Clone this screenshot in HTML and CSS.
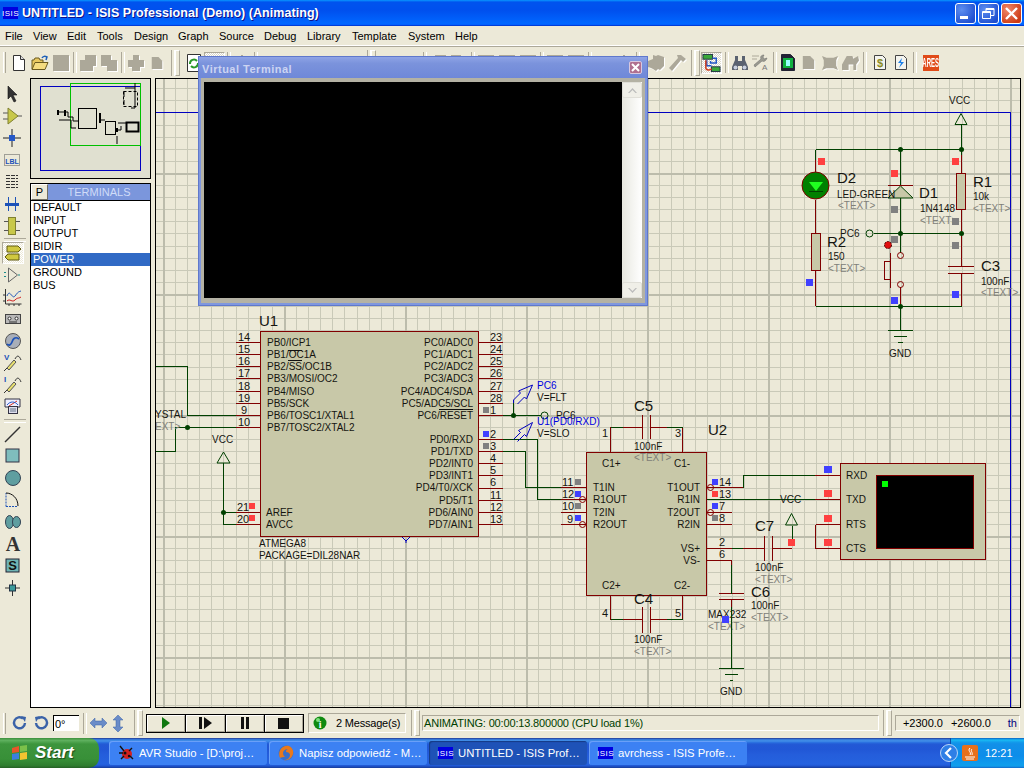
FILE: index.html
```html
<!DOCTYPE html>
<html lang="en">
<head>
<meta charset="utf-8">
<title>UNTITLED - ISIS Professional (Demo) (Animating)</title>
<link rel="stylesheet" href="styles.css">
</head>
<body>
<svg class="defs" width="0" height="0">
  <defs>
    <symbol id="gdoc" viewBox="0 0 16 18"><path d="M1 1h9l5 5v11H1z"/></symbol>
    <symbol id="gblock" viewBox="0 0 16 18"><path d="M0 1h16v16H0z"/></symbol>
    <symbol id="gcopy" viewBox="0 0 16 18"><path d="M5 1h11v11h-3v5H0V6h5z"/></symbol>
    <symbol id="gpaste" viewBox="0 0 16 18"><path d="M0 1h10v5h6v11H6v-5H0z"/></symbol>
    <symbol id="gprint" viewBox="0 0 16 18"><path d="M5 1h6v5h5v7h-4v4H4v-4H0V6h5z"/></symbol>
    <symbol id="gcirc" viewBox="0 0 16 18"><circle cx="8" cy="9" r="7"/></symbol>
    <symbol id="gplus" viewBox="0 0 16 18"><path d="M7 1h2v7h7v2H9v7H7v-7H0V8h7z"/></symbol>
    <symbol id="gchip" viewBox="0 0 16 18"><path d="M5 1l3 1 2-1 6 2v9l-4 4-2-1-2 2-3-2-2-1-3-1V7l5-2z"/></symbol>
    <symbol id="ghammer" viewBox="0 0 18 18"><path d="M9 1l4 0 5 4-3 3-2-2-9 11-3-3 9-10z"/></symbol>
    <symbol id="gcross" viewBox="0 0 18 18"><path d="M0 1l5 2h8l5-2-2 5v6l2 5-5-2H5l-5 2 2-5V6z"/></symbol>
    <symbol id="ghouse" viewBox="0 0 18 18"><path d="M5 2h6l1 3 5-3 1 5-3 4v6h-3v-6H7v6H0v-6z"/></symbol>
  </defs>
</svg>
<div class="app">

  <header class="titlebar">
    <span class="isis isis-title">ISIS</span>
    <span class="title-text">UNTITLED - ISIS Professional (Demo) (Animating)</span>
    <span class="win-btns">
      <span class="wbtn"><svg width="21" height="21" viewBox="0 0 21 21"><rect x="5" y="13" width="8" height="3" fill="#fff"/></svg></span>
      <span class="wbtn"><svg width="21" height="21" viewBox="0 0 21 21"><path d="M8 5.500h8v7h-3M8 5.500v3M8 6.500h8M4.500 8.500h8v7h-8zM4.500 9.500h8" fill="none" stroke="#fff"/></svg></span>
      <span class="wbtn wclose"><svg width="21" height="21" viewBox="0 0 21 21"><path d="M5 5l11 11M16 5L5 16" stroke="#fff" stroke-width="2.400"/></svg></span>
    </span>
  </header>

  <nav class="menubar">
    <span class="mi mi-file">File</span><span class="mi mi-view">View</span><span class="mi mi-edit">Edit</span><span class="mi mi-tools">Tools</span><span class="mi mi-design">Design</span><span class="mi mi-graph">Graph</span><span class="mi mi-source">Source</span><span class="mi mi-debug">Debug</span><span class="mi mi-library">Library</span><span class="mi mi-template">Template</span><span class="mi mi-system">System</span><span class="mi mi-help">Help</span>
  </nav>

  <div class="toolbar">
    <span class="grip"></span>
    <span class="tool"><svg width="14" height="18" viewBox="0 0 14 18"><path d="M1.500 1.500h7l4 4v11h-11z" fill="#fff" stroke="#333"/><path d="M8.500 1.500v4h4" fill="#ddd" stroke="#333"/></svg></span>
    <span class="tool"><svg width="18" height="18" viewBox="0 0 18 18"><path d="M1 15V6h2l1-2h4l1 2h3v2" fill="#e8c860" stroke="#6b5a20"/><path d="M1 15.500l3-7h13l-3 7z" fill="#f5dc80" stroke="#6b5a20"/><path d="M11 4c1-2 3-2 5-1l-1 3" fill="none" stroke="#1c5fb8" stroke-width="1.500"/></svg></span>
    <span class="tool gr"><svg width="16" height="18"><use href="#gblock"/></svg></span>
    <span class="sep"></span>
    <span class="tool gr"><svg width="16" height="18"><use href="#gcopy"/></svg></span>
    <span class="tool gr"><svg width="16" height="18"><use href="#gpaste"/></svg></span>
    <span class="sep"></span>
    <span class="tool gr"><svg width="16" height="18"><use href="#gprint"/></svg></span>
    <span class="tool gr"><svg width="12" height="18"><use href="#gdoc"/></svg></span>
    <span class="dsep"></span>
    <span class="tool"><svg width="16" height="20" viewBox="0 0 16 20"><path d="M1.500 1.500h13v17h-13z" fill="#fff" stroke="#333"/><path d="M4 11a4 4 0 0 1 7-3" fill="none" stroke="#2a9a2a" stroke-width="2"/><path d="M12 10a4 4 0 0 1-7 3" fill="none" stroke="#2a9a2a" stroke-width="2"/></svg></span>
    <span class="tool pressed"></span>
    <span class="sep"></span>
    <span class="tool gr"><svg width="16" height="18"><use href="#gplus"/></svg></span>
    <span class="sep"></span>
    <span class="tool gr"><svg width="16" height="18"><use href="#gcirc"/></svg></span>
    <span class="tool gr"><svg width="16" height="18"><use href="#gcirc"/></svg></span>
    <span class="tool gr"><svg width="16" height="18"><use href="#gcirc"/></svg></span>
    <span class="tool gr"><svg width="16" height="18"><use href="#gcirc"/></svg></span>
    <span class="tool gr"><svg width="16" height="18"><use href="#gcirc"/></svg></span>
    <span class="dsep"></span>
    <span class="tool gr"><svg width="16" height="18"><use href="#gcirc"/></svg></span>
    <span class="tool gr"><svg width="16" height="18"><use href="#gcirc"/></svg></span>
    <span class="sep"></span>
    <span class="tool gr"><svg width="16" height="18"><use href="#gcopy"/></svg></span>
    <span class="tool gr"><svg width="16" height="18"><use href="#gpaste"/></svg></span>
    <span class="sep"></span>
    <span class="tool gr"><svg width="16" height="18"><use href="#gblock"/></svg></span>
    <span class="tool gr"><svg width="16" height="18"><use href="#gblock"/></svg></span>
    <span class="tool gr"><svg width="16" height="18"><use href="#gblock"/></svg></span>
    <span class="sep"></span>
    <span class="tool gr"><svg width="16" height="18"><use href="#gblock"/></svg></span>
    <span class="tool gr"><svg width="16" height="18"><use href="#gblock"/></svg></span>
    <span class="sep"></span>
    <span class="tool gr"><svg width="16" height="18"><use href="#gcirc"/></svg></span>
    <span class="tool gr"><svg width="16" height="18"><use href="#gplus"/></svg></span>
    <span class="sep sep-wide"></span>
    <span class="tool gr"><svg width="16" height="18"><use href="#gchip"/></svg></span>
    <span class="tool gr"><svg width="18" height="18"><use href="#ghammer"/></svg></span>
    <span class="dsep dsep-r"></span>
    <span class="tool pressed link"><svg width="20" height="20" viewBox="0 0 20 20"><rect x="1" y="1" width="10" height="5" fill="#3aa83a" stroke="#234"/><rect x="10" y="14" width="9" height="5" fill="#3aa83a" stroke="#234"/><path d="M11 5h4v5H9v-2M5 7v6h5" fill="none" stroke="#2458c8" stroke-width="1.600"/><path d="M4 7v8c0 3 5 3 6 1" fill="none" stroke="#d04020" stroke-width="1.600"/></svg></span>
    <span class="sep"></span>
    <span class="tool"><svg width="16" height="16" viewBox="0 0 16 16"><path d="M3 1h3v5h4V1h3v4l3 7v3h-6v-4H6v4H0v-3l3-7z" fill="#5a6270"/><circle cx="3.500" cy="12.500" r="2" fill="#c8d0e0"/><circle cx="12.500" cy="12.500" r="2" fill="#c8d0e0"/></svg></span>
    <span class="tool"><svg width="17" height="17" viewBox="0 0 17 17"><path d="M12 1c-3 0-4 2-3 4L2 11l1 2 7-6c2 1 4 0 5-3l-3 1-1-2z" fill="#9a9a90" stroke="#666" stroke-width=".5"/><path d="M0 2h7M0 5h5" stroke="#aca899"/><text class="a-mini" x="10" y="16">A</text></svg></span>
    <span class="sep"></span>
    <span class="tool"><svg width="14" height="17" viewBox="0 0 14 17"><path d="M.5.500h9l4 4v12H.5z" fill="#223" stroke="#223"/><rect x="2" y="4" width="10" height="10" fill="#10b040"/><rect x="5" y="6" width="4" height="6" fill="#9ff"/></svg></span>
    <span class="tool gr"><svg width="13" height="17"><use href="#gdoc"/></svg></span>
    <span class="tool gr"><svg width="16" height="16"><use href="#gcross"/></svg></span>
    <span class="tool gr"><svg width="17" height="17"><use href="#ghouse"/></svg></span>
    <span class="sep sep-r"></span>
    <span class="tool"><svg width="12" height="15" viewBox="0 0 12 15"><path d="M.5.500h8l3 3v11H.5z" fill="#f4f4ee" stroke="#444"/><text class="dollar" x="6" y="12">$</text></svg></span>
    <span class="tool"><svg width="12" height="15" viewBox="0 0 12 15"><path d="M.5.500h8l3 3v11H.5z" fill="#f4f4ee" stroke="#444"/><path d="M7 3L3 8h3l-2 5 5-6H6z" fill="#1c7fe8"/></svg></span>
    <span class="sep"></span>
    <span class="ares"><span class="ares-text">ARES</span></span>
  </div>

  <main class="workarea">
    <aside class="lefttools">
      <span class="lt"><svg width="22" height="20" viewBox="0 0 22 20"><path d="M7 2v13l3-3 3 6 2-1-3-6h4z" fill="#333" stroke="#111" stroke-width=".6"/></svg></span>
      <span class="lt"><svg width="22" height="20" viewBox="0 0 22 20"><path d="M2 7h5M2 13h5M16 10h5" stroke="#555"/><path d="M7 2l10 8-10 8z" fill="#c8c84a" stroke="#808030"/></svg></span>
      <span class="lt"><svg width="22" height="20" viewBox="0 0 22 20"><path d="M2 10h18M11 1v18" stroke="#222"/><rect x="8" y="7" width="6" height="6" fill="#2458c8"/></svg></span>
      <span class="lt"><svg width="22" height="20" viewBox="0 0 22 20"><rect x="3.500" y="4.500" width="15" height="11" fill="none" stroke="#555" stroke-dasharray="1 1"/><text class="lbl" x="11" y="13.500">LBL</text></svg></span>
      <span class="lt"><svg width="22" height="20" viewBox="0 0 22 20"><path d="M5 3.500h12M5 6.500h12M5 9.500h12M5 12.500h12M5 15.500h12" stroke="#333" stroke-dasharray="4 1"/></svg></span>
      <span class="lt"><svg width="22" height="20" viewBox="0 0 22 20"><rect x="4" y="9" width="14" height="3" fill="#1c52b8"/><path d="M7.500 3v14M14.500 3v14" stroke="#1c52b8"/></svg></span>
      <span class="lt"><svg width="22" height="20" viewBox="0 0 22 20"><path d="M3 5.500h4M3 14.500h4M15 5.500h4M15 14.500h4" stroke="#555"/><rect x="7.500" y="1.500" width="7" height="17" fill="#c8c84a" stroke="#808030"/></svg></span>
      <span class="lsep"></span>
      <span class="lt on"><svg width="22" height="20" viewBox="0 0 22 20"><path d="M5 3h11l3 3-3 3H5z" fill="#d0c840" stroke="#605a10"/><path d="M17 11H6l-3 3 3 3h11z" fill="#d0c840" stroke="#605a10"/></svg></span>
      <span class="lt"><svg width="22" height="20" viewBox="0 0 22 20"><path d="M3 7.500h3M3 11.500h3M17 10h3" stroke="#1a8a8a" stroke-dasharray="2 1"/><path d="M7.500 3l9 7-9 7z" fill="none" stroke="#666"/></svg></span>
      <span class="lt"><svg width="22" height="20" viewBox="0 0 22 20"><path d="M4.500 2v15h16M2 14h3M2 8h3M8 17v2M13 17v2M18 17v2" fill="none" stroke="#333"/><path d="M6 9c3-8 5 4 8 0s3-4 6-5" fill="none" stroke="#1c52b8"/><path d="M6 14c3-3 5 2 8-1s3-1 6-3" fill="none" stroke="#d02020"/></svg></span>
      <span class="lt"><svg width="22" height="20" viewBox="0 0 22 20"><rect x="4.500" y="5.500" width="15" height="9" fill="#b8b8b8" stroke="#444"/><circle cx="8.500" cy="9.500" r="1.500" fill="#fff" stroke="#333"/><circle cx="15.500" cy="9.500" r="1.500" fill="#fff" stroke="#333"/><path d="M8 13h8" stroke="#333"/></svg></span>
      <span class="lt"><svg width="22" height="20" viewBox="0 0 22 20"><circle cx="12" cy="10" r="7.500" fill="#a8aeb8" stroke="#555"/><path d="M6 13c2 2 4 1 5-2s3-6 7-3" fill="none" stroke="#1c52b8" stroke-width="1.700"/></svg></span>
      <span class="lt"><svg width="22" height="20" viewBox="0 0 22 20"><path d="M3 18l3-3M14 6c2-4 4-4 6 1" fill="none" stroke="#333"/><path d="M6 15l7-8 2 2-7 8z" fill="#e8e070" stroke="#555"/><text class="probe" x="3" y="7">V</text></svg></span>
      <span class="lt"><svg width="22" height="20" viewBox="0 0 22 20"><path d="M3 18l3-3M14 6c2-4 4-4 6 1" fill="none" stroke="#333"/><path d="M6 15l7-8 2 2-7 8z" fill="#e8e070" stroke="#555"/><text class="probe" x="3" y="7">I</text></svg></span>
      <span class="lt"><svg width="22" height="20" viewBox="0 0 22 20"><path d="M4 2h15v8H4z" fill="#eef" stroke="#334"/><path d="M8 9l8-5" stroke="#d83020"/><path d="M6 8c3-4 8-4 11 0" fill="none" stroke="#2458c8"/><rect x="7.500" y="9.500" width="9" height="7" fill="#dde" stroke="#334"/><path d="M9 12h6M9 14h6" stroke="#678"/></svg></span>
      <span class="lsep"></span>
      <span class="lt"><svg width="22" height="20" viewBox="0 0 22 20"><path d="M4 18L19 3" stroke="#333" stroke-width="1.500"/></svg></span>
      <span class="lt"><svg width="22" height="20" viewBox="0 0 22 20"><rect x="5" y="3" width="13" height="13" fill="#7fbdbd" stroke="#334"/></svg></span>
      <span class="lt"><svg width="22" height="20" viewBox="0 0 22 20"><circle cx="12" cy="10" r="7.500" fill="#5f9ea0" stroke="#345"/></svg></span>
      <span class="lt"><svg width="22" height="20" viewBox="0 0 22 20"><path d="M5 16.500V3" fill="none" stroke="#1c52b8" stroke-dasharray="2 1"/><path d="M5 16.500h12" fill="none" stroke="#1c52b8" stroke-dasharray="2 1"/><path d="M5 3c6 0 12 5 12 13" fill="none" stroke="#111"/></svg></span>
      <span class="lt"><svg width="22" height="20" viewBox="0 0 22 20"><ellipse cx="8.500" cy="10" rx="4" ry="6.500" fill="#5f9ea0" stroke="#345"/><ellipse cx="15.500" cy="10" rx="4" ry="5.500" fill="#5f9ea0" stroke="#345"/></svg></span>
      <span class="lt"><svg width="22" height="20" viewBox="0 0 22 20"><text class="big-a" x="12" y="17">A</text></svg></span>
      <span class="lt"><svg width="22" height="20" viewBox="0 0 22 20"><rect x="5" y="3" width="13" height="13" fill="#6fb4b4" stroke="#223"/><text class="big-s" x="11.500" y="14">S</text></svg></span>
      <span class="lt"><svg width="22" height="20" viewBox="0 0 22 20"><path d="M4 10h15M11.500 2v16" stroke="#333"/><rect x="8.500" y="7" width="6" height="6" fill="#3b9a9a" stroke="#234"/></svg></span>
    </aside>

    <section class="sidepanel">
      <div class="overview">
        <svg width="119" height="99" viewBox="31 79 119 99">
          <rect x="40.500" y="86.500" width="100" height="84" fill="none" stroke="#0000c0"/>
          <rect x="70.500" y="83.500" width="70" height="62" fill="none" stroke="#00c000"/>
          <rect x="78.500" y="108.500" width="18" height="20" fill="none" stroke="#000"/>
          <rect x="105.500" y="121.500" width="10" height="13" fill="none" stroke="#000"/>
          <path d="M59 112h9v5h5v4h5M59 120h12v8h5M100 115v5h5M118 123h8M116 130h5v-4M117 136v8M125 88h10v20h-4M124 92v5M124 100v5M135 88v-5" fill="none" stroke="#000"/>
          <rect x="126.500" y="122.500" width="12" height="9" fill="#e0e0d0" stroke="#000" stroke-width="2"/>
          <rect x="123.500" y="91.500" width="14" height="15" fill="none" stroke="#000" stroke-dasharray="3 2"/>
          <path d="M58 110v5M65 110v6M100 113v10M117 128v4" stroke="#000" stroke-width="2"/>
        </svg>
      </div>
      <div class="panelhead">
        <span class="pbtn">P</span>
        <span class="pcap">TERMINALS</span>
      </div>
      <ul class="termlist">
        <li>DEFAULT</li>
        <li>INPUT</li>
        <li>OUTPUT</li>
        <li>BIDIR</li>
        <li class="sel">POWER</li>
        <li>GROUND</li>
        <li>BUS</li>
      </ul>
    </section>

    <section class="canvas">
      <svg class="schem" width="866" height="630" viewBox="155 78 866 630">
        <defs>
          <pattern id="grid" patternUnits="userSpaceOnUse" x="163" y="52" width="121" height="121">
            <path class="gl" d="M12 0v121M24 0v121M36 0v121M48 0v121M60 0v121M73 0v121M85 0v121M97 0v121M109 0v121M0 12h121M0 24h121M0 36h121M0 48h121M0 60h121M0 73h121M0 85h121M0 97h121M0 109h121"/>
            <path class="gm" d="M1 0v121M0 1h121"/>
          </pattern>
        </defs>
        <rect x="155" y="78" width="866" height="630" class="sheet"/>
        <path class="bound" d="M155 112.500H1010.500V708"/>

        <!-- U1 ATMEGA8 -->
        <rect class="body" x="260.500" y="331.500" width="218" height="205"/>
        <path class="pin" d="M236 342.500h24M236 354.500h24M236 366.500h24M236 378.500h24M236 391.500h24M236 403.500h24M236 415.500h24M236 427.500h24M236 512.500h24M236 524.500h24M478 342.500h25M478 354.500h25M478 366.500h25M478 378.500h25M478 391.500h25M478 403.500h25M478 415.500h25M478 439.500h25M478 451.500h25M478 463.500h25M478 475.500h25M478 488.500h25M478 500.500h25M478 512.500h25M478 524.500h25"/>
        <path class="wire" d="M155 366.500h32.500V415.500H236M155 451.500h20.500V427.500H236M223.500 463v49.500H236M223.500 512.500v12H236"/>
        <path class="wire" d="M503 415.500h38M513.500 415.500V403"/>
        <path class="wire" d="M503 439.500h34.500v60H561M503 451.500h22.500v36H561"/>
        <circle class="dot" cx="187.500" cy="427.500" r="2.500"/>
        <circle class="dot" cx="223.500" cy="512.500" r="2.500"/>
        <circle class="dot" cx="513.500" cy="415.500" r="2.500"/>
        <path class="term" d="M223.500 452l6.500 11h-13z"/>
        <circle class="openc" cx="544.500" cy="415.500" r="3.500"/>

        <text class="t" x="155" y="418">YSTAL</text>
        <text class="t g" x="155" y="430">EXT&gt;</text>
        <text class="t" x="212" y="443">VCC</text>
        <text class="lg" x="259" y="326">U1</text>
        <text class="t" x="259" y="547">ATMEGA8</text>
        <text class="t" x="259" y="559">PACKAGE=DIL28NAR</text>
        <g class="n">
          <text x="238" y="341">14</text><text x="238" y="353">15</text><text x="238" y="365">16</text><text x="238" y="377">17</text><text x="238" y="390">18</text><text x="238" y="402">19</text><text x="241" y="414">9</text><text x="238" y="426">10</text><text x="237" y="511">21</text><text x="237" y="523">20</text>
          <text x="490" y="341">23</text><text x="490" y="353">24</text><text x="490" y="365">25</text><text x="490" y="377">26</text><text x="490" y="390">27</text><text x="490" y="402">28</text><text x="490" y="414">1</text><text x="490" y="438">2</text><text x="490" y="450">3</text><text x="490" y="462">4</text><text x="490" y="474">5</text><text x="490" y="486">6</text><text x="490" y="499">11</text><text x="490" y="511">12</text><text x="490" y="523">13</text>
        </g>
        <g class="t">
          <text x="267" y="346">PB0/ICP1</text><text x="267" y="358">PB1/OC1A</text><text x="267" y="370">PB2/SS/OC1B</text><text x="267" y="382">PB3/MOSI/OC2</text><text x="267" y="395">PB4/MISO</text><text x="267" y="407">PB5/SCK</text><text x="267" y="419">PB6/TOSC1/XTAL1</text><text x="267" y="431">PB7/TOSC2/XTAL2</text><text x="266" y="516">AREF</text><text x="266" y="528">AVCC</text>
        </g>
        <g class="t r">
          <text x="473" y="346">PC0/ADC0</text><text x="473" y="358">PC1/ADC1</text><text x="473" y="370">PC2/ADC2</text><text x="473" y="382">PC3/ADC3</text><text x="473" y="395">PC4/ADC4/SDA</text><text x="473" y="407">PC5/ADC5/SCL</text><text x="473" y="419">PC6/RESET</text><text x="473" y="443">PD0/RXD</text><text x="473" y="455">PD1/TXD</text><text x="473" y="467">PD2/INT0</text><text x="473" y="479">PD3/INT1</text><text x="473" y="491">PD4/T0/XCK</text><text x="473" y="504">PD5/T1</text><text x="473" y="516">PD6/AIN0</text><text x="473" y="528">PD7/AIN1</text>
        </g>
        <path class="over" d="M288 350.500h14M288 360.500h14M439 409.500h34"/>
        <path class="probe-line" d="M402 537l4 4 4-4M406 541v2"/>

        <!-- probes -->
        <path class="probe-line" d="M513.500 403V400l7-7-2-2 14-6-6 14-2-2-7 7"/>
        <path class="probe-line" d="M513.500 439.500l7-7-2-2 14-8-6 14-2-2-7 7"/>
        <text class="t blue" x="537" y="389">PC6</text>
        <text class="t" x="537" y="401">V=FLT</text>
        <text class="t" x="556" y="419">PC6</text>
        <text class="t blue" x="537" y="425">U1(PD0/RXD)</text>
        <text class="t" x="537" y="437">V=SLO</text>

        <!-- U2 MAX232 -->
        <rect class="body" x="586.500" y="452.500" width="120" height="143"/>
        <path class="pin" d="M561 487.500h25M561 499.500h25M561 512.500h25M561 524.500h25M707 487.500h36M707 499.500h25M707 512.500h25M707 524.500h25M707 548.500h25M707 560.500h24.500V578M610.500 452v-25H623M682.500 452v-25H667M650 427.500h17M642 427.500h-19M610.500 595v24.500H623M682.500 595v24.500H667M650 619.500h17M642 619.500h-19"/>
        <path class="pin" d="M642.500 415v24M650.500 415v24M642.500 607v26M650.500 607v26"/>
        <path class="wire" d="M610.500 427.500H623M682.500 427.500H667M610.500 619.500H623M682.500 619.500H667"/>
        <circle class="invert" cx="582.500" cy="499.500" r="3"/>
        <circle class="invert" cx="582.500" cy="524.500" r="3"/>
        <circle class="invert" cx="710.500" cy="487.500" r="3"/>
        <circle class="invert" cx="710.500" cy="512.500" r="3"/>
        <text class="lg" x="634" y="411">C5</text>
        <text class="t" x="634" y="450">100nF</text>
        <text class="t g" x="634" y="461">&lt;TEXT&gt;</text>
        <text class="lg" x="708" y="435">U2</text>
        <text class="lg" x="634" y="604">C4</text>
        <text class="t" x="634" y="643">100nF</text>
        <text class="t g" x="634" y="655">&lt;TEXT&gt;</text>
        <text class="t" x="708" y="618">MAX232</text>
        <text class="t g" x="708" y="630">&lt;TEXT&gt;</text>
        <g class="t">
          <text x="602" y="467">C1+</text><text x="674" y="467">C1-</text><text x="602" y="589">C2+</text><text x="674" y="589">C2-</text>
          <text x="593" y="491">T1IN</text><text x="593" y="503">R1OUT</text><text x="593" y="516">T2IN</text><text x="593" y="528">R2OUT</text>
        </g>
        <g class="t r">
          <text x="700" y="491">T1OUT</text><text x="700" y="503">R1IN</text><text x="700" y="516">T2OUT</text><text x="700" y="528">R2IN</text><text x="700" y="552">VS+</text><text x="700" y="564">VS-</text>
        </g>
        <g class="n">
          <text x="562" y="486">11</text><text x="562" y="498">12</text><text x="562" y="510">10</text><text x="567" y="523">9</text>
          <text x="602" y="437">1</text><text x="675" y="437">3</text><text x="602" y="617">4</text><text x="675" y="617">5</text>
          <text x="719" y="486">14</text><text x="719" y="498">13</text><text x="719" y="510">7</text><text x="719" y="522">8</text><text x="719" y="546">2</text><text x="719" y="558">6</text>
        </g>

        <!-- C7 C6 -->
        <path class="pin" d="M732 548.500h-1M743 548.500h21M772 548.500h20M764 536v25M772 536v25M719 593.500h25M719 599.500h25M731.500 599v8"/>
        <path class="wire" d="M732 548.500h11M743 475.500V487.500M743 475.500h72M707 499.500h133M731.500 565v29M731.500 607v61M792 526v14"/>
        <path class="term" d="M791.500 513.500l6 11.500h-12z"/>
        <path class="wire" d="M719 668.500h25M725 674.500h13M730 680h3"/>
        <text class="t" x="780" y="503">VCC</text>
        <text class="lg" x="755" y="531">C7</text>
        <text class="t" x="755" y="571">100nF</text>
        <text class="t g" x="755" y="583">&lt;TEXT&gt;</text>
        <text class="lg" x="751" y="597">C6</text>
        <text class="t" x="751" y="609">100nF</text>
        <text class="t g" x="751" y="621">&lt;TEXT&gt;</text>
        <text class="t" x="720" y="695">GND</text>

        <!-- Terminal instrument -->
        <rect class="body" x="840.500" y="463.500" width="145" height="96"/>
        <rect class="screen" x="876.500" y="475.500" width="97" height="73"/>
        <path class="pin" d="M815 475.500h25M815 499.500h25M815.500 524.500h25M815.500 548.500h25M815.500 524.500v24"/>
        <g class="t">
          <text x="846" y="479">RXD</text><text x="846" y="503">TXD</text><text x="846" y="528">RTS</text><text x="846" y="552">CTS</text>
        </g>
        <rect class="sq gn" x="882" y="481" width="6" height="6"/>

        <!-- upper-right circuit -->
        <path class="wire" d="M815.500 149.500H961.500M961.500 124v25.500V155M900.500 149.500V186M900.500 198V253M874 233.500H961.500M815.500 150V160M815.500 306.500H961.500M900.500 306.500V330"/>
        <path class="pin" d="M961.500 155v18M961.500 209v24M961.500 233v33M961.500 273v33M815.500 160v12M815.500 200v33M815.500 271v35M900.500 287v19"/>
        <path class="term" d="M961 113.500l6 11h-12z"/>
        <path class="wire" d="M888 330.500h25M894 336.500h13M898 342h5"/>
        <circle class="dot" cx="900.500" cy="149.500" r="2.500"/>
        <circle class="dot" cx="961.500" cy="149.500" r="2.500"/>
        <circle class="dot" cx="900.500" cy="233.500" r="2.500"/>
        <circle class="dot" cx="961.500" cy="233.500" r="2.500"/>
        <circle class="dot" cx="900.500" cy="306.500" r="2.500"/>
        <circle class="led" cx="815.500" cy="185.500" r="13.500"/>
        <path class="ledg" d="M809 182h14l-7 9z"/>
        <path class="wire2" d="M809 191.500h14"/>
        <path class="diode" d="M900.500 186l12.500 12h-25z"/>
        <path class="pin" d="M888 185.500h25"/>
        <rect class="body" x="956.500" y="173.500" width="9" height="36"/>
        <rect class="body" x="811.500" y="233.500" width="9" height="37"/>
        <path class="pin" d="M948 266.500h26M948 273.500h26"/>
        <circle class="openc" cx="869.500" cy="233.500" r="3.500"/>
        <circle class="invert" cx="900.500" cy="255.500" r="3"/>
        <circle class="invert" cx="900.500" cy="284.500" r="3"/>
        <path class="pin" d="M890.500 253v35M890.500 261.500h-6v18h6"/>
        <circle class="spark" cx="888" cy="245" r="3.500"/>
        <text class="t" x="949" y="104">VCC</text>
        <text class="lg" x="837" y="183">D2</text>
        <text class="t" x="837" y="198">LED-GREEN</text>
        <text class="t g" x="838" y="209">&lt;TEXT&gt;</text>
        <text class="lg" x="919" y="198">D1</text>
        <text class="t" x="920" y="212">1N4148</text>
        <text class="t g" x="920" y="224">&lt;TEXT&gt;</text>
        <text class="lg" x="973" y="187">R1</text>
        <text class="t" x="973" y="200">10k</text>
        <text class="t g" x="973" y="212">&lt;TEXT&gt;</text>
        <text class="lg" x="827" y="247">R2</text>
        <text class="t" x="828" y="260">150</text>
        <text class="t g" x="828" y="272">&lt;TEXT&gt;</text>
        <text class="t" x="840" y="237">PC6</text>
        <text class="lg" x="981" y="271">C3</text>
        <text class="t" x="981" y="285">100nF</text>
        <text class="t g" x="981" y="296">&lt;TEXT&gt;</text>
        <text class="t" x="889" y="357">GND</text>

        <!-- logic state markers -->
        <g class="sq sr">
          <rect x="249" y="503" width="6" height="6"/><rect x="249" y="515" width="6" height="6"/>
          <rect x="712" y="491" width="6" height="6"/>
          <rect x="788" y="539" width="7" height="7"/>
          <rect x="824" y="490" width="8" height="7"/><rect x="824" y="515" width="8" height="7"/><rect x="824" y="539" width="8" height="7"/>
          <rect x="818" y="158" width="7" height="7"/><rect x="891" y="170" width="7" height="7"/><rect x="952" y="158" width="7" height="7"/>
        </g>
        <g class="sq sb">
          <rect x="483" y="431" width="6" height="6"/>
          <rect x="575" y="491" width="6" height="6"/><rect x="575" y="515" width="6" height="6"/>
          <rect x="712" y="479" width="6" height="6"/><rect x="712" y="503" width="6" height="6"/>
          <rect x="722" y="616" width="7" height="7"/>
          <rect x="824" y="466" width="8" height="7"/>
          <rect x="891" y="297" width="7" height="7"/><rect x="952" y="291" width="7" height="7"/><rect x="806" y="279" width="7" height="7"/>
        </g>
        <g class="sq sg">
          <rect x="483" y="407" width="6" height="6"/><rect x="483" y="443" width="6" height="6"/>
          <rect x="575" y="479" width="6" height="6"/><rect x="575" y="503" width="6" height="6"/>
          <rect x="712" y="515" width="6" height="6"/>
          <rect x="891" y="206" width="7" height="7"/><rect x="891" y="236" width="7" height="7"/><rect x="952" y="218" width="7" height="7"/><rect x="952" y="242" width="7" height="7"/>
        </g>
      </svg>
    </section>
  </main>

  <div class="bottombar">
    <span class="grip bgrip"></span>
    <span class="bicon"><svg width="16" height="16" viewBox="0 0 16 16"><path d="M13 8a5.500 5.500 0 1 1-2-4.500" fill="none" stroke="#3a62a8" stroke-width="2.400"/><path d="M9 1l5 1-1 5z" fill="#3a62a8"/></svg></span>
    <span class="bicon"><svg width="16" height="16" viewBox="0 0 16 16"><path d="M3 8a5.500 5.500 0 1 0 2-4.500" fill="none" stroke="#3a62a8" stroke-width="2.400"/><path d="M7 1L2 2l1 5z" fill="#3a62a8"/></svg></span>
    <input class="angle" value="0°" readonly>
    <span class="sep b-sep"></span>
    <span class="bicon wide"><svg width="17" height="10" viewBox="0 0 17 10"><path d="M0 5l5-5v3h7V0l5 5-5 5V7H5v3z" fill="#6a8cc8" stroke="#3a62a8" stroke-width=".5"/></svg></span>
    <span class="bicon narrow"><svg width="10" height="17" viewBox="0 0 10 17"><path d="M5 0l5 5H7v7h3l-5 5-5-5h3V5H0z" fill="#6a8cc8" stroke="#3a62a8" stroke-width=".5"/></svg></span>
    <span class="dsep bd"></span>
    <span class="transport">
      <span class="tb"><svg width="8" height="12" viewBox="0 0 8 12"><path d="M0 0l8 6-8 6z" fill="#107810"/></svg></span>
      <span class="tb"><svg width="13" height="12" viewBox="0 0 13 12"><path d="M0 0h3v12H0zM5 0l8 6-8 6z" fill="#111"/></svg></span>
      <span class="tb"><svg width="10" height="12" viewBox="0 0 10 12"><path d="M1 0h3v12H1zM6 0h3v12H6z" fill="#111"/></svg></span>
      <span class="tb"><svg width="11" height="11" viewBox="0 0 11 11"><rect width="11" height="11" fill="#111"/></svg></span>
    </span>
    <span class="msgs">
      <svg width="14" height="14" viewBox="0 0 14 14"><circle cx="7" cy="7" r="6.500" fill="#108a10"/><circle cx="5" cy="4" r="2" fill="#7fe07f"/><text class="info-i" x="7" y="11.500">i</text></svg>
      <span class="msgtxt">2 Message(s)</span>
    </span>
    <span class="dsep bd2"></span>
    <span class="status">ANIMATING: 00:00:13.800000 (CPU load 1%)</span>
    <span class="dsep bd3"></span>
    <span class="coords"><span class="cx">+2300.0</span><span class="cy">+2600.0</span><span class="unit">th</span></span>
  </div>

  <footer class="taskbar">
    <span class="start">
      <svg width="18" height="18" viewBox="0 0 18 18"><path d="M1 4l7-2v6l-7 1z" fill="#e8552a"/><path d="M9 2l7-1v6l-7 1z" fill="#7cc04a"/><path d="M1 10l7-1v6l-7 1z" fill="#3b7fe0"/><path d="M9 9l7-1v7l-7 1z" fill="#f4c430"/></svg>
      <span class="start-text">Start</span>
    </span>
    <span class="tasks">
      <span class="task"><svg width="16" height="16" viewBox="0 0 16 16"><ellipse cx="9" cy="9" rx="5" ry="5" fill="#d02020"/><path d="M2 1l4 5M1 8h4M3 14l3-3M14 3l-3 3M15 14l-3-3" stroke="#111" stroke-width="1.400"/><circle cx="7" cy="8" r="1.500" fill="#111"/><circle cx="11" cy="11" r="1.200" fill="#111"/></svg><span class="tlabel">AVR Studio - [D:\proj…</span></span>
      <span class="task"><svg width="16" height="16" viewBox="0 0 16 16"><circle cx="8" cy="8" r="7.500" fill="#3a6fc8"/><path d="M2 13C-1 6 5-1 11 1c3 1 5 5 4 8-1 4-5 7-9 6 3 0 6-2 6-5 0-2-2-3-4-3 0-2 1-3 2-3-3 0-5 2-5 4s1 3 2 4c-2 0-4 0-5 1z" fill="#e8791c"/></svg><span class="tlabel">Napisz odpowiedź - M…</span></span>
      <span class="task active"><span class="isis isis-task">ISIS</span><span class="tlabel">UNTITLED - ISIS Prof…</span></span>
      <span class="task"><span class="isis isis-task">ISIS</span><span class="tlabel">avrchess - ISIS Profe…</span></span>
    </span>
    <span class="tray-arrow"><svg width="16" height="16" viewBox="0 0 16 16"><path d="M10 3L5 8l5 5" fill="none" stroke="#fff" stroke-width="2.200"/></svg></span>
    <span class="tray">
      <svg width="16" height="16" viewBox="0 0 16 16"><rect width="16" height="16" rx="2" fill="#e8701c"/><path d="M3 12h10M4 14h8M8 3c-3 3 2 4 0 7M10 4c-2 2 1 3 0 6" fill="none" stroke="#fff"/></svg>
      <span class="clock">12:21</span>
    </span>
  </footer>

  <div class="vterm">
    <div class="vterm-title">
      <span class="vterm-cap">Virtual Terminal</span>
      <span class="vterm-close"><svg width="9" height="9" viewBox="0 0 9 9"><path d="M1 1l7 7M8 1L1 8" stroke="#fff" stroke-width="2"/></svg></span>
    </div>
    <div class="vterm-client">
      <div class="vterm-screen"></div>
      <div class="vterm-scroll">
        <span class="sb-btn"><svg width="9" height="5" viewBox="0 0 9 5"><path d="M0 5l4.500-5L9 5l-1.500 0L4.500 2 1.500 5z" fill="#bbb"/></svg></span>
        <span class="sb-btn"><svg width="9" height="5" viewBox="0 0 9 5"><path d="M0 0l4.500 5L9 0H7.500L4.500 3 1.500 0z" fill="#bbb"/></svg></span>
      </div>
    </div>
  </div>
</div>
</body>
</html>
```
FILE: styles.css
```css
* { box-sizing: border-box; }
html, body { margin: 0; padding: 0; }
body { width: 1024px; height: 768px; overflow: hidden; font-family: "Liberation Sans", Arial, sans-serif; background: #ece9d8; color: #000; }
.defs { position: absolute; }
.app { position: relative; width: 1024px; height: 768px; display: flex; flex-direction: column; overflow: hidden; }

/* title bar */
.titlebar { height: 26px; flex: none; display: flex; align-items: center; padding-left: 3px; color: #fff;
  background: linear-gradient(180deg, #0997ff 0, #0053ee 8%, #0050ee 40%, #0066ff 88%, #0066ff 93%, #005bff 95%, #003dd7 96%, #003dd7 100%); }
.isis { background: #0000e0; color: #fff; display: inline-flex; align-items: center; justify-content: center; font-size: 8px; letter-spacing: .5px; width: 15px; height: 12px; flex: none; }
.isis-title { margin-right: 4px; }
.title-text { font-weight: 700; font-size: 12.500px; letter-spacing: .05px; text-shadow: 1px 1px 0 #0f1089; white-space: nowrap; }
.win-btns { margin-left: auto; display: flex; gap: 2px; padding-right: 2px; }
.wbtn { width: 21px; height: 21px; border: 1px solid #fff; border-radius: 3px; display: block; background: radial-gradient(circle at 30% 30%, #5d8ef0, #1f4fd0 80%); overflow: hidden; }
.wbtn svg { display: block; margin: -1px; }
.wclose { background: radial-gradient(circle at 30% 30%, #f0886a, #cc3a14 80%); }

/* menu */
.menubar { height: 20px; flex: none; display: flex; align-items: center; font-size: 11px; position: relative; border-bottom: 1px solid #fff; }
.mi { flex: none; }
.mi-file { margin-left: 5px; width: 28px; }
.mi-view { width: 34px; }
.mi-edit { width: 30px; }
.mi-tools { width: 37px; }
.mi-design { width: 44px; }
.mi-graph { width: 41px; }
.mi-source { width: 45px; }
.mi-debug { width: 43px; }
.mi-library { width: 45px; }
.mi-template { width: 56px; }
.mi-system { width: 47px; }

/* top toolbar */
.toolbar { height: 32px; flex: none; display: flex; align-items: center; padding-left: 3px; border-top: 1px solid #aca899; }
.grip { width: 3px; height: 21px; border-left: 1px solid #fff; border-right: 1px solid #aca899; margin-right: 2px; flex: none; }
.tool { width: 21px; height: 22px; flex: none; display: flex; align-items: center; justify-content: center; }
.gr svg { fill: #aca899; filter: drop-shadow(1px 1px 0 #fff); }
.pressed { background: repeating-conic-gradient(#fff 0 25%, #d8d5c8 0 50%) 0 0 / 2px 2px; border: 1px solid; border-color: #aca899 #fff #fff #aca899; }
.sep { width: 6px; height: 21px; flex: none; position: relative; display: block; }
.sep::before { content: ""; position: absolute; left: 2px; top: 0; bottom: 0; width: 2px; border-left: 1px solid #aca899; border-right: 1px solid #fff; }
.sep-r { width: 8px; }
.sep-wide { width: 11px; }
.dsep { width: 16px; height: 26px; flex: none; position: relative; display: block; }
.dsep::before { content: ""; position: absolute; left: 4px; top: 0; bottom: 0; width: 2px; border-left: 1px solid #aca899; border-right: 1px solid #fff; }
.dsep::after { content: ""; position: absolute; left: 8px; top: 0; bottom: 0; width: 3px; border: 1px solid; border-color: #fff #aca899 #aca899 #fff; }
.dsep-r { width: 14px; }
.link { width: 21px; margin-right: 1px; }
.a-mini { font: 8px "Liberation Sans", sans-serif; fill: #777; }
.dollar { font: 700 11px "Liberation Sans", sans-serif; fill: #8a8a20; text-anchor: middle; }
.ares { background: #e04a18; color: #fff; width: 16px; height: 16px; margin-left: 6px; display: flex; align-items: center; justify-content: center; flex: none; }
.ares-text { font: 700 12px "Liberation Sans", sans-serif; transform: scaleX(.5); white-space: nowrap; }

/* work area */
.workarea { height: 630px; flex: none; display: flex; }
.lefttools { width: 30px; flex: none; display: flex; flex-direction: column; padding-top: 5px; padding-left: 1px; }
.lt { width: 22px; height: 22px; flex: none; display: flex; align-items: center; justify-content: center; }
.lt svg { flex: none; }
.lt.on { background: repeating-conic-gradient(#fff 0 25%, #ece9d8 0 50%) 0 0 / 2px 2px; border: 1px solid; border-color: #aca899 #fff #fff #aca899; margin-left: 1px; }
.lsep { height: 4px; flex: none; width: 22px; margin-left: 3px; border-top: 1px solid #aca899; border-bottom: 1px solid #fff; margin-top: 1px; margin-bottom: 0; }
.sidepanel { width: 121px; flex: none; display: flex; flex-direction: column; }
.overview { height: 101px; flex: none; background: #e0e0d0; border: 1px solid #000; }
.overview svg { display: block; }
.panelhead { height: 17px; margin-top: 4px; flex: none; display: flex; border: 1px solid #000; border-bottom: 0; background: #7b96dc; }
.pbtn { width: 17px; height: 16px; background: #ece9d8; border: 1px solid; border-color: #fff #716f64 #716f64 #fff; font-size: 11px; display: flex; align-items: center; justify-content: center; flex: none; }
.pcap { flex: 1; text-align: center; font-size: 11px; color: #d0dcf8; line-height: 16px; }
.termlist { flex: 1; margin: 0; padding: 0; list-style: none; background: #fff; border: 1px solid #000; font-size: 11px; }
.termlist li { height: 13px; line-height: 13px; padding-left: 2px; }
.termlist .sel { background: #316ac5; color: #fff; }
.canvas { margin-left: 4px; width: 866px; flex: none; border: 1px solid #000; border-right-width: 1px; overflow: hidden; }
.schem { display: block; margin: -1px; }

/* schematic */
.sheet { fill: url(#grid) #e0e0d0; }
.gl { stroke: #c9c9b8; stroke-width: 1; fill: none; shape-rendering: crispEdges; transform: translate(.5px, .5px); }
.gm { stroke: #bcbcac; stroke-width: 2; fill: none; shape-rendering: crispEdges; }
.bound { fill: none; stroke: #0000c0; shape-rendering: crispEdges; }
.body { fill: #c8c8a8; stroke: #800000; shape-rendering: crispEdges; }
.pin { fill: none; stroke: #800000; shape-rendering: crispEdges; }
.wire { fill: none; stroke: #004000; shape-rendering: crispEdges; }
.wire2 { fill: none; stroke: #004000; }
.dot { fill: #004000; }
.term { fill: none; stroke: #004000; }
.openc { fill: none; stroke: #004000; }
.invert { fill: none; stroke: #800000; }
.over { fill: none; stroke: #111; shape-rendering: crispEdges; }
.probe-line { fill: none; stroke: #0000c0; }
.screen { fill: #000; stroke: #800000; shape-rendering: crispEdges; }
.led { fill: #008000; stroke: #800000; }
.ledg { fill: #20ff20; }
.diode { fill: #c8c8a8; stroke: #004000; }
.spark { fill: #e01010; stroke: #400; stroke-dasharray: 2 1; }
.sq { shape-rendering: crispEdges; }
.sr { fill: #ff4040; }
.sb { fill: #4040ff; }
.sg { fill: #808080; }
.gn { fill: #00ff00; }
.t { font: 10px "Liberation Sans", Arial, sans-serif; fill: #151510; }
.t.g, .g { fill: #808078; }
.t.r { text-anchor: end; }
.t.blue { fill: #0000e0; }
.lg { font: 15px "Liberation Sans", Arial, sans-serif; fill: #151510; }
.n { font: 11px "Liberation Sans", Arial, sans-serif; fill: #151510; }

/* left tool glyphs */
.lbl { font: 700 7px "Liberation Sans", sans-serif; fill: #1c52b8; text-anchor: middle; }
.probe { font: 700 8px "Liberation Sans", sans-serif; fill: #1c52b8; }
.big-a { font: 700 20px "Liberation Serif", serif; fill: #333; text-anchor: middle; }
.big-s { font: 700 13px "Liberation Sans", sans-serif; fill: #111; text-anchor: middle; }

/* bottom bar */
.bottombar { height: 30px; flex: none; display: flex; align-items: center; padding-left: 3px; position: relative; }
.bgrip { margin-right: 3px; }
.bicon { width: 21px; flex: none; display: flex; align-items: center; justify-content: center; }
.bicon.wide { width: 23px; }
.bicon.narrow { width: 16px; }
.angle { width: 26px; height: 16px; margin-left: 2px; border: 0; background: #fff; border-top: 1px solid #000; border-left: 1px solid #000; font: 11px "Liberation Sans", sans-serif; padding: 0 0 0 1px; flex: none; }
.b-sep { margin-left: 2px; }
.bd { margin-left: 4px; width: 16px; }
.transport { display: flex; width: 158px; height: 19px; border: 1px solid #000; flex: none; background: #000; gap: 1px; }
.tb { flex: 1; display: flex; align-items: center; justify-content: center; background: #ece9d8; border: 1px solid; border-color: #fff #aca899 #aca899 #fff; }
.msgs { width: 98px; height: 20px; margin-left: 4px; flex: none; display: flex; align-items: center; padding-left: 4px; border: 1px solid; border-color: #aca899 #fff #fff #aca899; font-size: 11px; letter-spacing: -.2px; }
.msgtxt { margin-left: 9px; }
.info-i { font: 700 10px "Liberation Serif", serif; fill: #fff; text-anchor: middle; }
.bd2 { margin-left: 1px; width: 15px; }
.status { width: 457px; height: 16px; flex: none; border: 1px solid; border-color: #aca899 #fff #fff #aca899; color: #004000; font-size: 11px; letter-spacing: -.16px; line-height: 14px; padding-left: 1px; white-space: nowrap; }
.bd3 { width: 16px; margin-left: 0; }
.coords { width: 125px; height: 16px; flex: none; border: 1px solid; border-color: #aca899 #fff #fff #aca899; font-size: 11px; line-height: 14px; display: flex; }
.cx { width: 47px; text-align: right; }
.cy { width: 48px; text-align: right; }
.unit { margin-left: auto; color: #000080; padding-right: 2px; }

/* taskbar */
.taskbar { height: 30px; flex: none; display: flex; align-items: center; color: #fff;
  background: linear-gradient(180deg, #1f2f86 0, #3165c4 3%, #3682e5 6%, #4490e6 10%, #3883e5 12%, #2b71e0 15%, #2663da 18%, #235bd6 20%, #2258d5 23%, #2157d6 38%, #245ddb 54%, #2562df 86%, #245fdc 89%, #2158d4 92%, #1d4ec0 95%, #1941a5 98%); }
.start { width: 99px; height: 30px; flex: none; display: flex; align-items: center; padding-left: 11px; gap: 6px; border-radius: 0 10px 10px 0;
  background: linear-gradient(180deg, #3c8f3c 0, #5eb05e 8%, #3d953d 20%, #389038 70%, #2f7d2f 92%, #256025 100%); }
.start-text { font: italic 700 17px "Liberation Sans", sans-serif; text-shadow: 1px 1px 1px #1a4a1a; }
.tasks { display: flex; gap: 2px; margin-left: 10px; }
.task { width: 158px; height: 24px; flex: none; display: flex; align-items: center; gap: 5px; padding-left: 9px; border-radius: 3px; background: #3c81f3; font-size: 11.300px; box-shadow: inset 1px 1px 0 #6aa0f8; white-space: nowrap; overflow: hidden; }
.task.active { background: #1e52b7; box-shadow: inset 1px 1px 1px #143a85; }
.isis-task { width: 15px; height: 12px; }
.tray-arrow { margin-left: auto; width: 18px; height: 18px; border-radius: 50%; border: 1px solid #bcd6f8; background: #2f7fe6; display: flex; align-items: center; justify-content: center; margin-right: -8px; position: relative; flex: none; }
.tray { width: 74px; height: 30px; flex: none; display: flex; align-items: center; padding-left: 11px; background: linear-gradient(180deg, #0c59b9 0, #139ee9 4%, #18b5f2 8%, #139beb 14%, #1290e8 20%, #0d8dea 60%, #0f9eed 90%, #119be9 94%, #1367c8 100%); border-left: 1px solid #0a4aa8; }
.clock { font-size: 11px; margin-left: 7px; }

/* floating virtual terminal */
.vterm { position: absolute; left: 198px; top: 56px; width: 450px; height: 250px; background: #7f97de; border: 1px solid #5f78cc; display: flex; flex-direction: column; }
.vterm-title { height: 21px; flex: none; display: flex; align-items: center; padding-left: 3px; padding-top: 2px; background: linear-gradient(180deg, #8fa4e6 0, #7b93dc 30%, #6f88d8 100%); }
.vterm-cap { font-size: 11px; font-weight: 700; color: #ccd4f2; letter-spacing: .5px; }
.vterm-close { margin-left: auto; margin-right: 5px; margin-top: -2px; width: 13px; height: 13px; background: #b07090; border: 1px solid #d8c8e0; border-radius: 2px; display: flex; align-items: center; justify-content: center; }
.vterm-client { flex: 1; margin: 0 2px 2px; display: flex; background: #b4b2a4; padding: 4px 3px 5px; }
.vterm-screen { width: 418px; background: #000; flex: none; }
.vterm-scroll { flex: 1; display: flex; flex-direction: column; justify-content: space-between; background: linear-gradient(90deg, #e8e8e0, #fff); }
.sb-btn { height: 16px; display: flex; align-items: center; justify-content: center; border: 1px solid #e0dfd8; border-radius: 2px; background: #f0efe8; }
```
